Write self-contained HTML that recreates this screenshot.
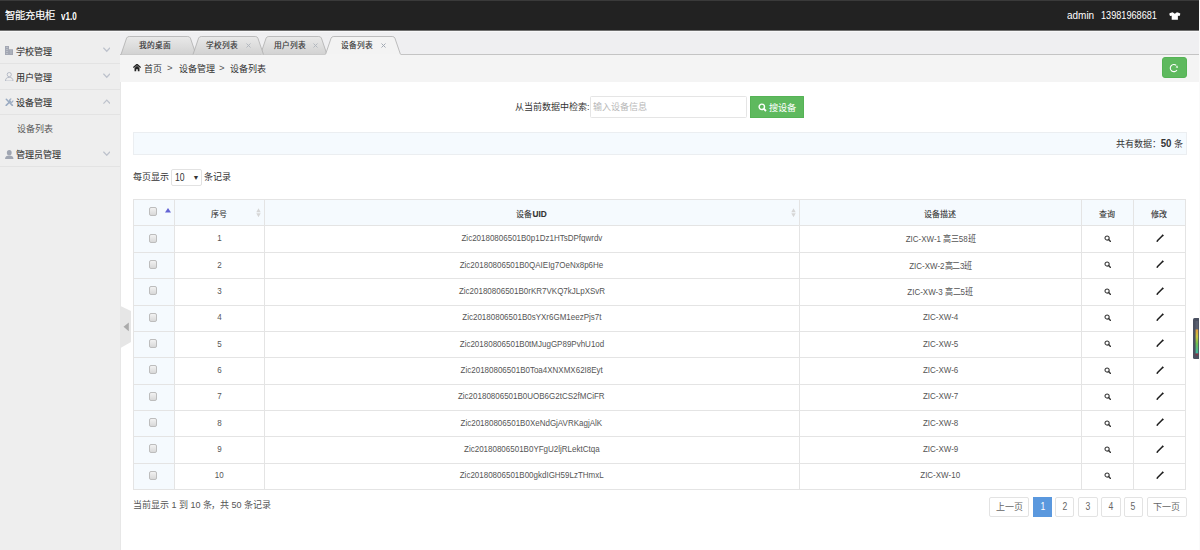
<!DOCTYPE html>
<html lang="zh-CN"><head><meta charset="utf-8">
<style>
*{box-sizing:border-box;margin:0;padding:0}
html,body{width:1200px;height:550px;overflow:hidden;background:#fff;font-family:"Liberation Sans",sans-serif;color:#333}
.abs{position:absolute}
#hdr{position:absolute;left:0;top:0;width:1199px;height:31px;background:#222;border-top:1px solid #3a3a3a;border-bottom:1px solid #111}
#rstrip{position:absolute;left:1199px;top:0;width:1px;height:550px;background:#fafafa}
#side{position:absolute;left:0;top:31px;width:121px;height:519px;background:#eee;border-right:1px solid #e7e7e7}
.mi{position:absolute;left:0;width:120px;height:26px;border-bottom:1px solid #e3e3e3;font-size:9px;color:#333}
.mi .t{position:absolute;left:16.3px;top:8.1px;line-height:12px;font-weight:500;-webkit-text-stroke:0.1px #333}
.mi .ic{position:absolute;left:4px;top:8px;width:10px;height:10px}
.mi .ar{position:absolute;left:102.7px;top:9.6px;width:7.5px;height:5.5px}
#tabbar{position:absolute;left:120px;top:31px;width:1079px;height:24px;background:#efeff1;border-bottom:1px solid #c8c8c8}
.tab{position:absolute;top:5px;height:19px;font-size:7.7px;color:#333;line-height:19px;-webkit-text-stroke:0.15px #333}
#crumb{position:absolute;left:120px;top:55px;width:1079px;height:27px;background:#f4f4f4;font-size:9px;color:#333}

.btn-g{position:absolute;background:#5eb95e;border-radius:2px;color:#fff}
#info{position:absolute;left:133px;top:132px;width:1054px;height:23px;background:#f5fafe;border:1px solid #ebeef1}
table.tb{position:absolute;left:132.6px;top:199.3px;width:1053px;border-collapse:collapse;table-layout:fixed}
.tb th,.tb td{border:1px solid #e4e4e4;text-align:center;font-size:8px;color:#333;height:26.36px;padding:0;white-space:nowrap;position:relative}
.tb th{background:#f5fafe;font-weight:500;height:26.2px;-webkit-text-stroke:0.12px #333}
.tb td.c0{background:#f5fafe}
.cb{display:inline-block;width:7.5px;height:9px;border:1px solid #bdbdbd;border-radius:2px;background:linear-gradient(#f2f2f2,#d8d8d8);vertical-align:middle;margin-top:-3px}
.n{display:inline-block;font-size:9.3px;transform:translateY(-0.6px) scaleX(0.86);color:#555}
.h{display:inline-block;font-size:8px;margin-top:1px}
.srt{position:absolute;right:2.6px;top:7.6px;width:5px;height:9.5px}
.pn{display:inline-block;font-size:10px;transform:scaleX(0.86)}
.pg{position:absolute;top:497px;height:19.5px;border:1px solid #e3e3e3;border-radius:2px;background:#fff;font-size:9px;color:#666;text-align:center;line-height:17.5px}
</style></head><body>
<div id="hdr">
  <div class="abs" style="left:4.6px;top:8.1px;font-size:10.4px;color:#fff;line-height:13px;white-space:nowrap;-webkit-text-stroke:0.15px #fff">智能充电柜</div>
  <div class="abs" style="left:60.8px;top:8.9px;font-size:10.6px;font-weight:bold;color:#fff;line-height:13px;white-space:nowrap;transform:scaleX(0.76);transform-origin:0 0">v1.0</div>
  <div class="abs" style="left:1067px;top:7.5px;font-size:10.5px;color:#fff;line-height:13px;white-space:nowrap;transform:scaleX(0.95);transform-origin:0 0">admin</div>
  <div class="abs" style="left:1100.5px;top:7.5px;font-size:10.5px;color:#fff;line-height:13px;white-space:nowrap;transform:scaleX(0.87);transform-origin:0 0">13981968681</div>
  <svg class="abs" style="left:1169px;top:11px" width="11.6" height="8" viewBox="0 0 11.6 8.6" preserveAspectRatio="none"><path d="M0.2 2 Q0.6 1 3.6 0.2 L5.8 1.8 L8 0.2 Q11 1 11.4 2 L10.6 4.4 L8.9 4 L8.9 8.4 L2.7 8.4 L2.7 4 L1 4.4 Z" fill="#fff"/></svg>
</div>
<div id="side">
  <div class="mi" style="top:6.9px"><svg class="ic" style="left:5px;top:8px;width:8.5px;height:9.5px" viewBox="0 0 8.5 9.5"><path d="M0 0 H4 V3.3 H8 V9.5 H0 Z" fill="#a3a7b3"/><path d="M1 1.5 H3 M1 3.5 H3 M1 5.5 H3 M1 7.5 H3 M5 5 H7 M5 7 H7" stroke="#c8ccd4" stroke-width="0.6"/></svg><span class="t">学校管理</span><svg class="ar" viewBox="0 0 7 5"><path d="M0.4 0.6 L3.5 3.9 L6.6 0.6" stroke="#bdc2cc" stroke-width="1.15" fill="none"/></svg></div>
  <div class="mi" style="top:32.5px"><svg class="ic" style="left:5px;top:8.2px;width:8.5px;height:9.5px" viewBox="0 0 8.5 9.5"><circle cx="4.25" cy="2.6" r="2.1" stroke="#a9b0be" stroke-width="0.8" fill="none"/><path d="M0.5 9.1 C0.5 6.2 2 5.4 4.25 5.4 C6.5 5.4 8 6.2 8 9.1 Z" stroke="#a9b0be" stroke-width="0.8" fill="none"/></svg><span class="t">用户管理</span><svg class="ar" viewBox="0 0 7 5"><path d="M0.4 0.6 L3.5 3.9 L6.6 0.6" stroke="#bdc2cc" stroke-width="1.15" fill="none"/></svg></div>
  <div class="mi" style="top:58px"><svg class="ic" style="left:5px;top:8.8px;width:8.6px;height:8.6px" viewBox="0 0 8.6 8.6"><path d="M1.3 1.3 L7.4 7.4" stroke="#9aabc2" stroke-width="1.5" stroke-linecap="round"/><path d="M1.2 7.4 L5.3 3.3" stroke="#9aabc2" stroke-width="1.5" stroke-linecap="round"/><path d="M6.3 0.9 A1.7 1.7 0 1 0 8.0 2.6" stroke="#9aabc2" stroke-width="1.2" fill="none"/></svg><span class="t">设备管理</span><svg class="ar" viewBox="0 0 7 5"><path d="M0.4 4.2 L3.5 0.9 L6.6 4.2" stroke="#bdc2cc" stroke-width="1.15" fill="none"/></svg></div>
  <div class="mi" style="top:84px;border-bottom:none"><span class="t" style="left:16.5px;color:#5a5a5a;-webkit-text-stroke:0;font-weight:400">设备列表</span></div>
  <div class="mi" style="top:110.2px"><svg class="ic" style="left:5px;top:8.4px;width:8.5px;height:9.5px" viewBox="0 0 8.5 9.5"><ellipse cx="4.25" cy="2.7" rx="2.4" ry="2.6" fill="#a0a6b2"/><path d="M0 9.5 C0 6.5 1.6 5.6 4.25 5.6 C6.9 5.6 8.5 6.5 8.5 9.5 Z" fill="#a0a6b2"/></svg><span class="t">管理员管理</span><svg class="ar" viewBox="0 0 7 5"><path d="M0.4 0.6 L3.5 3.9 L6.6 0.6" stroke="#bdc2cc" stroke-width="1.15" fill="none"/></svg></div>
</div>
<div id="tabbar"></div>
<svg class="abs" style="left:0;top:0" width="1200" height="60" viewBox="0 0 1200 60"><defs><linearGradient id="tg" x1="0" y1="0" x2="0" y2="1"><stop offset="0" stop-color="#e9e9e9"/><stop offset="1" stop-color="#d2d2d2"/></linearGradient></defs><rect x="0" y="30.6" width="1199" height="1.2" fill="#fbfbfb"/><rect x="120" y="54" width="1079" height="1" fill="#c4c4c4"/><path d="M121,54.5 L126.6,38.1 Q127.3,36.5 129.3,36.5 L187.7,36.5 Q189.7,36.5 190.4,38.1 L196,54.5" fill="url(#tg)" stroke="#aeaeae" stroke-width="0.8"/><path d="M260.5,54.5 L266.1,38.1 Q266.8,36.5 268.8,36.5 L318.7,36.5 Q320.7,36.5 321.4,38.1 L327,54.5" fill="url(#tg)" stroke="#aeaeae" stroke-width="0.8"/><path d="M193,54.5 L198.6,38.1 Q199.3,36.5 201.3,36.5 L255.2,36.5 Q257.2,36.5 257.9,38.1 L263.5,54.5" fill="url(#tg)" stroke="#aeaeae" stroke-width="0.8"/><rect x="325" y="54" width="76" height="1.2" fill="#f4f4f4"/><path d="M325.5,54.5 L331.1,38.1 Q331.8,36.5 333.8,36.5 L392.2,36.5 Q394.2,36.5 394.9,38.1 L400.5,54.5" fill="#f3f3f3" stroke="#aeaeae" stroke-width="0.8"/></svg>
<div class="tab" style="left:135px;width:40px;text-align:center;top:36px">我的桌面</div>
<div class="tab" style="left:202px;width:40px;text-align:center;top:36px">学校列表</div>
<div class="tab" style="left:269.5px;width:40px;text-align:center;top:36px">用户列表</div>
<div class="tab" style="left:337px;width:40px;text-align:center;top:36px">设备列表</div>
<svg class="abs" style="left:246px;top:43px" width="5" height="5" viewBox="0 0 5 5"><path d="M0.5 0.5L4.5 4.5M4.5 0.5L0.5 4.5" stroke="#b0b5bd" stroke-width="0.95"/></svg>
<svg class="abs" style="left:313px;top:43px" width="5" height="5" viewBox="0 0 5 5"><path d="M0.5 0.5L4.5 4.5M4.5 0.5L0.5 4.5" stroke="#b0b5bd" stroke-width="0.95"/></svg>
<svg class="abs" style="left:381.2px;top:43.1px" width="5" height="5" viewBox="0 0 5 5"><path d="M0.5 0.5L4.5 4.5M4.5 0.5L0.5 4.5" stroke="#a2a9b3" stroke-width="1"/></svg>

<div id="crumb">
  <svg class="abs" style="left:13px;top:9px" width="8" height="7.5" viewBox="0 0 8 7.5"><path d="M0.4 3.6 L4 0.4 L7.6 3.6" stroke="#222" stroke-width="1.4" fill="none" stroke-linejoin="miter"/><path d="M1.5 3.9 L4 1.7 L6.5 3.9 L6.5 7.3 L4.8 7.3 L4.8 5.3 L3.2 5.3 L3.2 7.3 L1.5 7.3 Z" fill="#222"/></svg>
  <div class="abs" style="left:24.3px;top:8.3px;line-height:12px;white-space:nowrap">首页</div>
  <div class="abs" style="left:47px;top:7.4px;line-height:12px;white-space:nowrap;font-size:9.5px;color:#555">&gt;</div>
  <div class="abs" style="left:58.5px;top:8.3px;line-height:12px;white-space:nowrap">设备管理</div>
  <div class="abs" style="left:99px;top:7.4px;line-height:12px;white-space:nowrap;font-size:9.5px;color:#555">&gt;</div>
  <div class="abs" style="left:110px;top:8.3px;line-height:12px;white-space:nowrap">设备列表</div>
</div>
<div class="abs" style="left:1161.8px;top:56.5px;width:24.8px;height:21.5px;background:#5eb95e;border-radius:3px;border:0.6px solid #55b355"></div>


<svg class="abs" style="left:1169px;top:62.5px" width="10" height="10" viewBox="0 0 10 10"><path d="M7.3 2.4 A3.6 3.6 0 1 0 7.9 7" stroke="#fff" stroke-width="1.1" fill="none"/><path d="M6.6 4.3 L8.9 4.9 L8.4 2.6 Z" fill="#fff"/></svg>
<div class="abs" style="left:515px;top:101px;font-size:9px;line-height:12px;color:#333;white-space:nowrap">从当前数据中检索:</div>
<div class="abs" style="left:590px;top:96px;width:157px;height:21.5px;border:1px solid #e5e5e5;border-radius:1.5px;background:#fff"></div>
<div class="abs" style="left:593px;top:101px;font-size:9px;line-height:12px;color:#b8b8b8;white-space:nowrap">输入设备信息</div>
<div class="btn-g" style="left:750px;top:96px;width:53.5px;height:21.7px;border-radius:0.5px;border:1px solid #55b355"></div>
<svg class="abs" style="left:758px;top:102.5px" width="9" height="9" viewBox="0 0 9 9"><circle cx="3.8" cy="3.8" r="2.7" stroke="#fff" stroke-width="1.4" fill="none"/><path d="M5.6 5.6 L8 8" stroke="#fff" stroke-width="1.8"/></svg>
<div class="abs" style="left:768.8px;top:101.6px;font-size:9.2px;line-height:12px;color:#fff;white-space:nowrap">搜设备</div>
<div id="info"><div class="abs" style="right:2.5px;top:4px;font-size:9px;line-height:12px;color:#333;white-space:nowrap">共有数据：<b style="font-size:11px;display:inline-block;transform:scaleX(0.88);margin:0 -0.6px;vertical-align:-0.5px">50</b> 条</div></div>
<div class="abs" style="left:133px;top:171px;font-size:9px;line-height:12px;color:#333;white-space:nowrap">每页显示</div>
<div class="abs" style="left:170.5px;top:169px;width:31px;height:16.5px;border:1px solid #e2e2e2;border-radius:2px;background:#fff;font-size:9px;line-height:14px;color:#333;padding-left:3px"><span style="position:absolute;left:3px;top:1px;line-height:13px;font-size:10px;transform:scaleX(0.86);transform-origin:0 50%">10</span><span style="position:absolute;left:21px;top:0.5px;font-size:7px;line-height:13px">▼</span></div>
<div class="abs" style="left:204px;top:171px;font-size:9px;line-height:12px;color:#333;white-space:nowrap">条记录</div>
<table class="tb"><colgroup><col style="width:41px"><col style="width:90px"><col style="width:535px"><col style="width:282.5px"><col style="width:51.5px"><col style="width:52px"></colgroup><tr><th><span class="cb" style="margin-left:-1px;margin-top:-4px"></span><svg class="abs" style="right:3px;top:8.2px" width="6" height="4.5" viewBox="0 0 6 4.5"><path d="M0 4.5 L3 0 L6 4.5Z" fill="#6464d4"/></svg></th><th><span class="h">序号</span><svg class="srt" viewBox="0 0 5 9.5"><path d="M0.3 4.3 L2.5 0.3 L4.7 4.3Z M0.3 5.2 L2.5 9.2 L4.7 5.2Z" fill="#d6d6d6"/></svg></th><th><span class="h">设备<b style="font-size:8.3px">UID</b></span><svg class="srt" viewBox="0 0 5 9.5"><path d="M0.3 4.3 L2.5 0.3 L4.7 4.3Z M0.3 5.2 L2.5 9.2 L4.7 5.2Z" fill="#d6d6d6"/></svg></th><th><span class="h">设备描述</span></th><th><span class="h">查询</span></th><th><span class="h">修改</span></th></tr><tr><td class="c0"><span class="cb" style="margin-left:-1px"></span></td><td><span class="n">1</span></td><td><span class="n">Zic20180806501B0p1Dz1HTsDPfqwrdv</span></td><td><span class="n">ZIC-XW-1 高三58班</span></td><td><svg width="7.5" height="7" viewBox="0 0 7.5 7" style="vertical-align:middle;margin-top:-2px;margin-left:0.5px"><circle cx="3.1" cy="3" r="2.1" stroke="#383838" stroke-width="1.05" fill="none"/><path d="M4.6 4.5 L6.5 6.4" stroke="#383838" stroke-width="1.4" stroke-linecap="round"/></svg></td><td><svg width="8" height="8.5" viewBox="0 0 8 8.5" style="vertical-align:middle;margin-top:-3px;margin-left:1px"><path d="M1.6 6.6 L6.6 1.4" stroke="#1e1e1e" stroke-width="1.5" stroke-linecap="round"/><path d="M0.4 8.1 L0.9 6.2 L2.3 7.5Z" fill="#1e1e1e"/><path d="M6.2 0.8 L7.4 2" stroke="#1e1e1e" stroke-width="1.2"/></svg></td></tr><tr><td class="c0"><span class="cb" style="margin-left:-1px"></span></td><td><span class="n">2</span></td><td><span class="n">Zic20180806501B0QAIEIg7OeNx8p6He</span></td><td><span class="n">ZIC-XW-2高二3班</span></td><td><svg width="7.5" height="7" viewBox="0 0 7.5 7" style="vertical-align:middle;margin-top:-2px;margin-left:0.5px"><circle cx="3.1" cy="3" r="2.1" stroke="#383838" stroke-width="1.05" fill="none"/><path d="M4.6 4.5 L6.5 6.4" stroke="#383838" stroke-width="1.4" stroke-linecap="round"/></svg></td><td><svg width="8" height="8.5" viewBox="0 0 8 8.5" style="vertical-align:middle;margin-top:-3px;margin-left:1px"><path d="M1.6 6.6 L6.6 1.4" stroke="#1e1e1e" stroke-width="1.5" stroke-linecap="round"/><path d="M0.4 8.1 L0.9 6.2 L2.3 7.5Z" fill="#1e1e1e"/><path d="M6.2 0.8 L7.4 2" stroke="#1e1e1e" stroke-width="1.2"/></svg></td></tr><tr><td class="c0"><span class="cb" style="margin-left:-1px"></span></td><td><span class="n">3</span></td><td><span class="n">Zic20180806501B0rKR7VKQ7kJLpXSvR</span></td><td><span class="n">ZIC-XW-3 高二5班</span></td><td><svg width="7.5" height="7" viewBox="0 0 7.5 7" style="vertical-align:middle;margin-top:-2px;margin-left:0.5px"><circle cx="3.1" cy="3" r="2.1" stroke="#383838" stroke-width="1.05" fill="none"/><path d="M4.6 4.5 L6.5 6.4" stroke="#383838" stroke-width="1.4" stroke-linecap="round"/></svg></td><td><svg width="8" height="8.5" viewBox="0 0 8 8.5" style="vertical-align:middle;margin-top:-3px;margin-left:1px"><path d="M1.6 6.6 L6.6 1.4" stroke="#1e1e1e" stroke-width="1.5" stroke-linecap="round"/><path d="M0.4 8.1 L0.9 6.2 L2.3 7.5Z" fill="#1e1e1e"/><path d="M6.2 0.8 L7.4 2" stroke="#1e1e1e" stroke-width="1.2"/></svg></td></tr><tr><td class="c0"><span class="cb" style="margin-left:-1px"></span></td><td><span class="n">4</span></td><td><span class="n">Zic20180806501B0sYXr6GM1eezPjs7t</span></td><td><span class="n">ZIC-XW-4</span></td><td><svg width="7.5" height="7" viewBox="0 0 7.5 7" style="vertical-align:middle;margin-top:-2px;margin-left:0.5px"><circle cx="3.1" cy="3" r="2.1" stroke="#383838" stroke-width="1.05" fill="none"/><path d="M4.6 4.5 L6.5 6.4" stroke="#383838" stroke-width="1.4" stroke-linecap="round"/></svg></td><td><svg width="8" height="8.5" viewBox="0 0 8 8.5" style="vertical-align:middle;margin-top:-3px;margin-left:1px"><path d="M1.6 6.6 L6.6 1.4" stroke="#1e1e1e" stroke-width="1.5" stroke-linecap="round"/><path d="M0.4 8.1 L0.9 6.2 L2.3 7.5Z" fill="#1e1e1e"/><path d="M6.2 0.8 L7.4 2" stroke="#1e1e1e" stroke-width="1.2"/></svg></td></tr><tr><td class="c0"><span class="cb" style="margin-left:-1px"></span></td><td><span class="n">5</span></td><td><span class="n">Zic20180806501B0tMJugGP89PvhU1od</span></td><td><span class="n">ZIC-XW-5</span></td><td><svg width="7.5" height="7" viewBox="0 0 7.5 7" style="vertical-align:middle;margin-top:-2px;margin-left:0.5px"><circle cx="3.1" cy="3" r="2.1" stroke="#383838" stroke-width="1.05" fill="none"/><path d="M4.6 4.5 L6.5 6.4" stroke="#383838" stroke-width="1.4" stroke-linecap="round"/></svg></td><td><svg width="8" height="8.5" viewBox="0 0 8 8.5" style="vertical-align:middle;margin-top:-3px;margin-left:1px"><path d="M1.6 6.6 L6.6 1.4" stroke="#1e1e1e" stroke-width="1.5" stroke-linecap="round"/><path d="M0.4 8.1 L0.9 6.2 L2.3 7.5Z" fill="#1e1e1e"/><path d="M6.2 0.8 L7.4 2" stroke="#1e1e1e" stroke-width="1.2"/></svg></td></tr><tr><td class="c0"><span class="cb" style="margin-left:-1px"></span></td><td><span class="n">6</span></td><td><span class="n">Zic20180806501B0Toa4XNXMX62I8Eyt</span></td><td><span class="n">ZIC-XW-6</span></td><td><svg width="7.5" height="7" viewBox="0 0 7.5 7" style="vertical-align:middle;margin-top:-2px;margin-left:0.5px"><circle cx="3.1" cy="3" r="2.1" stroke="#383838" stroke-width="1.05" fill="none"/><path d="M4.6 4.5 L6.5 6.4" stroke="#383838" stroke-width="1.4" stroke-linecap="round"/></svg></td><td><svg width="8" height="8.5" viewBox="0 0 8 8.5" style="vertical-align:middle;margin-top:-3px;margin-left:1px"><path d="M1.6 6.6 L6.6 1.4" stroke="#1e1e1e" stroke-width="1.5" stroke-linecap="round"/><path d="M0.4 8.1 L0.9 6.2 L2.3 7.5Z" fill="#1e1e1e"/><path d="M6.2 0.8 L7.4 2" stroke="#1e1e1e" stroke-width="1.2"/></svg></td></tr><tr><td class="c0"><span class="cb" style="margin-left:-1px"></span></td><td><span class="n">7</span></td><td><span class="n">Zic20180806501B0UOB6G2tCS2fMCiFR</span></td><td><span class="n">ZIC-XW-7</span></td><td><svg width="7.5" height="7" viewBox="0 0 7.5 7" style="vertical-align:middle;margin-top:-2px;margin-left:0.5px"><circle cx="3.1" cy="3" r="2.1" stroke="#383838" stroke-width="1.05" fill="none"/><path d="M4.6 4.5 L6.5 6.4" stroke="#383838" stroke-width="1.4" stroke-linecap="round"/></svg></td><td><svg width="8" height="8.5" viewBox="0 0 8 8.5" style="vertical-align:middle;margin-top:-3px;margin-left:1px"><path d="M1.6 6.6 L6.6 1.4" stroke="#1e1e1e" stroke-width="1.5" stroke-linecap="round"/><path d="M0.4 8.1 L0.9 6.2 L2.3 7.5Z" fill="#1e1e1e"/><path d="M6.2 0.8 L7.4 2" stroke="#1e1e1e" stroke-width="1.2"/></svg></td></tr><tr><td class="c0"><span class="cb" style="margin-left:-1px"></span></td><td><span class="n">8</span></td><td><span class="n">Zic20180806501B0XeNdGjAVRKagjAlK</span></td><td><span class="n">ZIC-XW-8</span></td><td><svg width="7.5" height="7" viewBox="0 0 7.5 7" style="vertical-align:middle;margin-top:-2px;margin-left:0.5px"><circle cx="3.1" cy="3" r="2.1" stroke="#383838" stroke-width="1.05" fill="none"/><path d="M4.6 4.5 L6.5 6.4" stroke="#383838" stroke-width="1.4" stroke-linecap="round"/></svg></td><td><svg width="8" height="8.5" viewBox="0 0 8 8.5" style="vertical-align:middle;margin-top:-3px;margin-left:1px"><path d="M1.6 6.6 L6.6 1.4" stroke="#1e1e1e" stroke-width="1.5" stroke-linecap="round"/><path d="M0.4 8.1 L0.9 6.2 L2.3 7.5Z" fill="#1e1e1e"/><path d="M6.2 0.8 L7.4 2" stroke="#1e1e1e" stroke-width="1.2"/></svg></td></tr><tr><td class="c0"><span class="cb" style="margin-left:-1px"></span></td><td><span class="n">9</span></td><td><span class="n">Zic20180806501B0YFgU2ljRLektCtqa</span></td><td><span class="n">ZIC-XW-9</span></td><td><svg width="7.5" height="7" viewBox="0 0 7.5 7" style="vertical-align:middle;margin-top:-2px;margin-left:0.5px"><circle cx="3.1" cy="3" r="2.1" stroke="#383838" stroke-width="1.05" fill="none"/><path d="M4.6 4.5 L6.5 6.4" stroke="#383838" stroke-width="1.4" stroke-linecap="round"/></svg></td><td><svg width="8" height="8.5" viewBox="0 0 8 8.5" style="vertical-align:middle;margin-top:-3px;margin-left:1px"><path d="M1.6 6.6 L6.6 1.4" stroke="#1e1e1e" stroke-width="1.5" stroke-linecap="round"/><path d="M0.4 8.1 L0.9 6.2 L2.3 7.5Z" fill="#1e1e1e"/><path d="M6.2 0.8 L7.4 2" stroke="#1e1e1e" stroke-width="1.2"/></svg></td></tr><tr><td class="c0"><span class="cb" style="margin-left:-1px"></span></td><td><span class="n">10</span></td><td><span class="n">Zic20180806501B00gkdIGH59LzTHmxL</span></td><td><span class="n">ZIC-XW-10</span></td><td><svg width="7.5" height="7" viewBox="0 0 7.5 7" style="vertical-align:middle;margin-top:-2px;margin-left:0.5px"><circle cx="3.1" cy="3" r="2.1" stroke="#383838" stroke-width="1.05" fill="none"/><path d="M4.6 4.5 L6.5 6.4" stroke="#383838" stroke-width="1.4" stroke-linecap="round"/></svg></td><td><svg width="8" height="8.5" viewBox="0 0 8 8.5" style="vertical-align:middle;margin-top:-3px;margin-left:1px"><path d="M1.6 6.6 L6.6 1.4" stroke="#1e1e1e" stroke-width="1.5" stroke-linecap="round"/><path d="M0.4 8.1 L0.9 6.2 L2.3 7.5Z" fill="#1e1e1e"/><path d="M6.2 0.8 L7.4 2" stroke="#1e1e1e" stroke-width="1.2"/></svg></td></tr></table>
<div class="abs" style="left:133px;top:499px;font-size:9px;line-height:12px;color:#555;white-space:nowrap">当前显示 1 到 10 条<span style="margin-left:-1px">，</span>共 50 条记录</div>
<div class="pg" style="left:989.2px;width:40.2px"><span style="position:relative;top:0.8px">上一页</span></div>
<div class="pg" style="left:1033.4px;width:18.2px;background:#5a98de;border-color:#5a98de;color:#fff;border-radius:0"><span class="pn">1</span></div>
<div class="pg" style="left:1055.3px;width:19.2px"><span class="pn">2</span></div>
<div class="pg" style="left:1078.2px;width:19.4px"><span class="pn">3</span></div>
<div class="pg" style="left:1101.2px;width:19.4px"><span class="pn">4</span></div>
<div class="pg" style="left:1123.9px;width:18.7px"><span class="pn">5</span></div>
<div class="pg" style="left:1146.5px;width:40.1px"><span style="position:relative;top:0.8px">下一页</span></div>
<svg class="abs" style="left:120px;top:305px" width="12" height="44" viewBox="0 0 12 44"><path d="M0.5 1 L11 6 L11 37 L0.5 43 Z" fill="#e6e6e6"/><path d="M3.5 21.8 L8.8 17.5 L8.8 26.3 Z" fill="#aaa"/></svg>
<svg class="abs" style="left:1192.5px;top:318px" width="7" height="41" viewBox="0 0 7 41"><defs><linearGradient id="led" x1="0" y1="0" x2="0" y2="1"><stop offset="0" stop-color="#5a6070"/><stop offset="0.22" stop-color="#5a6070"/><stop offset="0.26" stop-color="#e0a040"/><stop offset="0.45" stop-color="#c8c840"/><stop offset="0.65" stop-color="#70c050"/><stop offset="0.9" stop-color="#40b8a0"/><stop offset="0.95" stop-color="#903040"/><stop offset="1" stop-color="#4a5060"/></linearGradient></defs><rect x="0" y="0" width="7" height="41" rx="1.5" fill="#4a5060"/><rect x="2.6" y="3" width="2.6" height="35" fill="url(#led)"/></svg>
<div id="rstrip"></div>
</body></html>
